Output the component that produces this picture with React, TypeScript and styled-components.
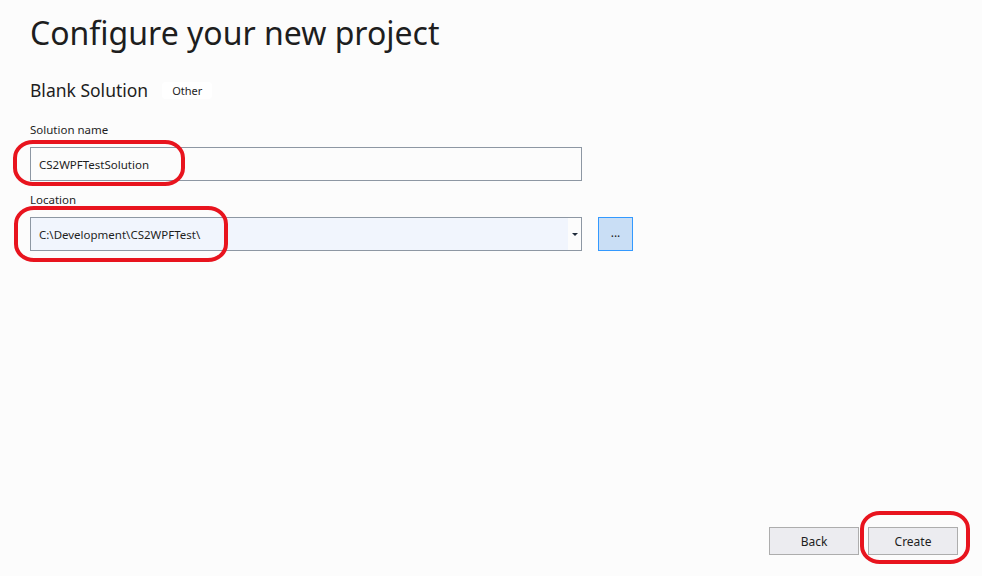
import React from "react";
import styled, { createGlobalStyle } from "styled-components";

const Global = createGlobalStyle`
  html, body { margin: 0; padding: 0; background: #fcfcfc; }
  body { font-family: "Noto Sans", "Open Sans", sans-serif; color: #1e1e1e; }
`;

const Page = styled.div`
  position: relative;
  width: 982px;
  height: 576px;
  box-sizing: border-box;
  display: flex;
  flex-direction: column;
  padding: 0 24px 21px 30px;
  overflow: hidden;
`;

const Title = styled.h1`
  margin: 12px 0 0 0;
  font-weight: 400;
  font-size: 32px;
  line-height: 42px;
  color: #1e1e1e;
`;

const SubRow = styled.div`
  display: flex;
  align-items: center;
  gap: 14px;
  margin-top: 25px;
`;

const Subtitle = styled.div`
  font-size: 17.5px;
  line-height: 22px;
`;

const Tag = styled.span`
  background: #ffffff;
  border-radius: 4px;
  font-size: 11px;
  line-height: 17px;
  padding: 0 10px;
`;

const Field = styled.div<{ $top: number }>`
  display: flex;
  flex-direction: column;
  margin-top: ${(p) => p.$top}px;
`;

const Label = styled.label`
  font-size: 11.5px;
  line-height: 14px;
  margin-bottom: 10px;
`;

const Row = styled.div`
  display: flex;
  align-items: center;
  gap: 16px;
`;

const TextBox = styled.div`
  width: 552px;
  height: 34px;
  box-sizing: border-box;
  border: 1px solid #8d97a3;
  background: #fcfcfc;
  display: flex;
  align-items: center;
  padding-left: 8px;
  font-size: 11.5px;
`;

const Combo = styled(TextBox)`
  background: #f1f5fd;
  padding-right: 0;
`;

const ComboText = styled.span`
  flex: 1;
`;

const DropZone = styled.div`
  width: 13px;
  height: 100%;
  background: #fcfcfc;
  display: flex;
  align-items: center;
  justify-content: center;
`;

const Arrow = styled.div`
  width: 0;
  height: 0;
  border-left: 3px solid transparent;
  border-right: 3px solid transparent;
  border-top: 3px solid #1e2a3a;
`;

const BrowseButton = styled.button`
  width: 35px;
  height: 34px;
  box-sizing: border-box;
  border: 1px solid #3399ff;
  background: #c9def5;
  font-family: inherit;
  font-size: 12px;
  color: #1e1e1e;
  padding: 0 0 4px 0;
  display: flex;
  align-items: center;
  justify-content: center;
`;

const Spacer = styled.div`
  flex: 1;
`;

const Footer = styled.div`
  display: flex;
  justify-content: flex-end;
  gap: 9px;
`;

const FooterButton = styled.button`
  width: 90px;
  height: 28px;
  box-sizing: border-box;
  border: 1px solid #adadad;
  background: #ececf0;
  font-family: inherit;
  font-size: 12px;
  color: #1e1e1e;
  padding: 0;
`;

const Highlight = styled.div<{ $x: number; $y: number; $w: number; $h: number }>`
  position: absolute;
  left: ${(p) => p.$x}px;
  top: ${(p) => p.$y}px;
  width: ${(p) => p.$w}px;
  height: ${(p) => p.$h}px;
  box-sizing: border-box;
  border: 4px solid #e8141e;
  border-radius: 20px / 18px;
  pointer-events: none;
`;

export default function App() {
  return (
    <>
      <Global />
      <Page>
        <Title>Configure your new project</Title>
        <SubRow>
          <Subtitle>Blank Solution</Subtitle>
          <Tag>Other</Tag>
        </SubRow>
        <Field $top={22}>
          <Label>Solution name</Label>
          <TextBox>CS2WPFTestSolution</TextBox>
        </Field>
        <Field $top={12}>
          <Label>Location</Label>
          <Row>
            <Combo>
              <ComboText>C:\Development\CS2WPFTest\</ComboText>
              <DropZone>
                <Arrow />
              </DropZone>
            </Combo>
            <BrowseButton>...</BrowseButton>
          </Row>
        </Field>
        <Spacer />
        <Footer>
          <FooterButton>Back</FooterButton>
          <FooterButton>Create</FooterButton>
        </Footer>
        <Highlight $x={13} $y={140} $w={172} $h={46} />
        <Highlight $x={14} $y={206} $w={214} $h={56} />
        <Highlight $x={860} $y={511} $w={110} $h={53} />
      </Page>
    </>
  );
}
